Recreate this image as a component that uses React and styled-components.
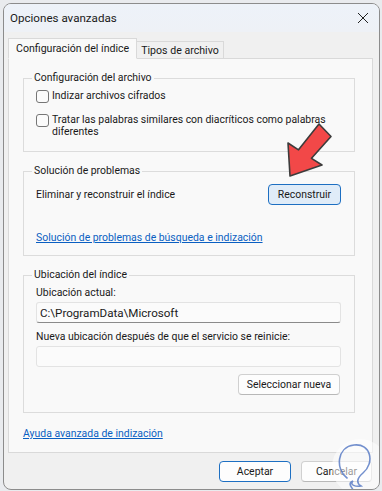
import styled, { createGlobalStyle } from "styled-components";

const GlobalStyle = createGlobalStyle`
  html, body {
    margin: 0;
    padding: 0;
    background: #e9ebee;
  }
  body {
    font-family: Roboto, "Noto Sans", "Liberation Sans", sans-serif;
    font-size: 10.45px;
    color: #1a1a1a;
  }
  * { box-sizing: border-box; }
`;

const Page = styled.div`
  width: 382px;
  height: 491px;
  padding: 3px 2px 2px 3px;
`;

const Window = styled.div`
  position: relative;
  width: 377px;
  height: 487px;
  border: 1px solid #8c8c8c;
  border-radius: 8px;
  background: #f0f0f0;
  overflow: hidden;
  display: flex;
  flex-direction: column;
`;

const TitleBar = styled.div`
  height: 28px;
  display: flex;
  align-items: center;
  justify-content: space-between;
  padding: 0 6px 0 6px;
  background: linear-gradient(#edf2f9, #eef1f6);
  font-size: 11.6px;
`;

const CloseIcon = styled.svg`
  width: 12px;
  height: 12px;
  margin-right: 4px;
`;

const Body = styled.div`
  flex: 1;
  display: flex;
  flex-direction: column;
  padding: 6px 6px 0 4px;
`;

const TabRow = styled.div`
  display: flex;
  align-items: flex-end;
  height: 21px;
  position: relative;
  z-index: 1;
  margin-bottom: -1px;
`;

const Tab = styled.div`
  height: ${(p) => (p.$active ? "21px" : "18px")};
  padding: 0 ${(p) => (p.$active ? "7px" : "4px")};
  display: flex;
  align-items: center;
  border: 1px solid #d9d9d9;
  border-bottom: ${(p) => (p.$active ? "1px solid #f9f9f9" : "1px solid #d9d9d9")};
  border-left: ${(p) => (p.$active ? "1px solid #d9d9d9" : "none")};
  background: ${(p) => (p.$active ? "#f9f9f9" : "#f0f0f0")};
  font-size: 10.6px;
`;

const Panel = styled.div`
  height: 395px;
  border: 1px solid #d9d9d9;
  background: #f9f9f9;
  padding: 12px 17px 0 14px;
  display: flex;
  flex-direction: column;
`;

const Group = styled.fieldset`
  margin: 0 0 ${(p) => p.$gap || 0}px 0;
  padding: 0 0 0 12px;
  border: 1px solid #dcdcdc;
  min-height: ${(p) => p.$h}px;
  display: flex;
  flex-direction: column;
`;

const Legend = styled.legend`
  padding: 0 2px;
  margin-left: -4px;
  line-height: 14px;
`;

const CheckRow = styled.label`
  display: flex;
  align-items: flex-start;
  gap: 3px;
  margin-top: ${(p) => p.$mt}px;
  line-height: 12px;
`;

const Box = styled.span`
  flex: none;
  width: 13px;
  height: 13px;
  border: 1px solid #767676;
  border-radius: 3px;
  background: #fbfbfb;
`;

const Row = styled.div`
  display: flex;
  align-items: center;
  justify-content: space-between;
  margin-top: ${(p) => p.$mt || 0}px;
  padding-right: ${(p) => p.$pr || 0}px;
`;

const Button = styled.button`
  font: inherit;
  color: #1a1a1a;
  height: 21px;
  width: ${(p) => p.$w}px;
  border-radius: 4px;
  border: 1px solid ${(p) => (p.$accent ? "#1d6fc2" : "#d0d0d0")};
  border-bottom-color: ${(p) => (p.$accent ? "#1d6fc2" : "#b8b8b8")};
  background: ${(p) => (p.$tint ? "#e0ecf8" : "#fdfdfd")};
  padding: 0;
`;

const Link = styled.a`
  color: #0a5fc2;
  text-decoration: underline;
  margin-top: ${(p) => p.$mt || 0}px;
  line-height: 14px;
`;

const Label = styled.div`
  margin-top: ${(p) => p.$mt || 0}px;
  line-height: 14px;
`;

const Field = styled.div`
  width: 305px;
  height: 21px;
  margin-top: ${(p) => p.$mt || 0}px;
  border: 1px solid #e3e3e3;
  border-bottom-color: ${(p) => (p.$filled ? "#8a8a8a" : "#e3e3e3")};
  border-radius: 3px;
  background: #fbfbfb;
  display: flex;
  align-items: center;
  padding-left: 3px;
  font-size: 11.6px;
`;

const Footer = styled.div`
  display: flex;
  justify-content: flex-end;
  gap: 10px;
  padding: 8px 1px 0 0;
`;

const Overlay = styled.svg`
  position: absolute;
  left: 0;
  top: 0;
  pointer-events: none;
`;

export default function App() {
  return (
    <Page>
      <GlobalStyle />
      <Window>
        <TitleBar>
          <span>Opciones avanzadas</span>
          <CloseIcon viewBox="0 0 12 12">
            <path d="M1 1L11 11M11 1L1 11" stroke="#222" strokeWidth="1" />
          </CloseIcon>
        </TitleBar>
        <Body>
          <TabRow>
            <Tab $active>Configuración del índice</Tab>
            <Tab>Tipos de archivo</Tab>
          </TabRow>
          <Panel>
            <Group $h={81} $gap={12}>
              <Legend>Configuración del archivo</Legend>
              <CheckRow $mt={5}>
                <Box />
                <span>Indizar archivos cifrados</span>
              </CheckRow>
              <CheckRow $mt={11}>
                <Box />
                <span>
                  Tratar las palabras similares con diacríticos como palabras
                  diferentes
                </span>
              </CheckRow>
            </Group>
            <Group $h={92} $gap={12}>
              <Legend>Solución de problemas</Legend>
              <Row $mt={6} $pr={13}>
                <span>Eliminar y reconstruir el índice</span>
                <Button $w={73} $accent $tint>
                  Reconstruir
                </Button>
              </Row>
              <Link $mt={26}>Solución de problemas de búsqueda e indización</Link>
            </Group>
            <Group $h={145}>
              <Legend>Ubicación del índice</Legend>
              <Label $mt={4}>Ubicación actual:</Label>
              <Field $mt={2} $filled>
                C:\ProgramData\Microsoft
              </Field>
              <Label $mt={7}>Nueva ubicación después de que el servicio se reinicie:</Label>
              <Field $mt={2} />
              <Row $mt={7} $pr={14}>
                <span />
                <Button $w={102}>Seleccionar nueva</Button>
              </Row>
            </Group>
            <Link $mt={14}>Ayuda avanzada de indización</Link>
          </Panel>
          <Footer>
            <Button $w={72} $accent>
              Aceptar
            </Button>
            <Button $w={71}>Cancelar</Button>
          </Footer>
        </Body>
        <Overlay width="377" height="487" viewBox="3 3 377 487">
          <polygon
            points="289,175 287,142 297.5,148.8 318,123 330,135.5 310.5,157.3 321,164"
            fill="#f24848"
            stroke="#3c3c3c"
            strokeWidth="1.6"
            strokeLinejoin="round"
          />
          <circle cx="359" cy="466" r="28" fill="#ffffff" opacity="0.55" />
          <path
            d="M346 477 C 334 468, 336 446, 353 444 C 370 442, 374 462, 362 472 C 356 477, 355 482, 360 485 C 355 486, 348 484, 352 480 C 344 483, 356 490, 350 489"
            fill="none"
            stroke="#5a7cc6"
            strokeWidth="1.6"
            strokeLinecap="round"
            opacity="0.85"
          />
        </Overlay>
      </Window>
    </Page>
  );
}
